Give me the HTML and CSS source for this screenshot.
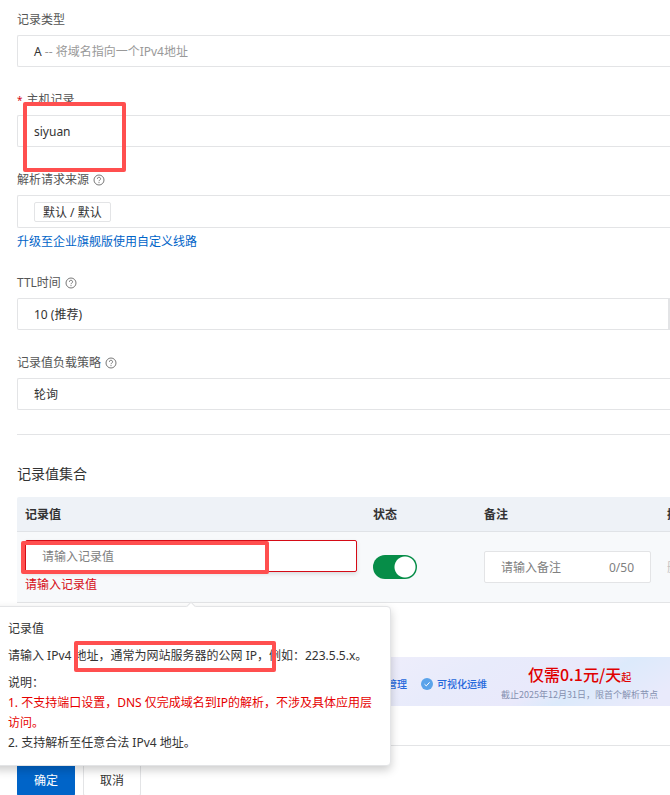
FILE: index.html
```html
<!DOCTYPE html>
<html lang="zh-CN">
<head>
  <meta charset="utf-8">
  <meta name="viewport" content="width=device-width, initial-scale=1">
  <title>添加记录</title>
  <link rel="stylesheet" href="styles.css">
</head>
<body>
  <svg class="sprite" aria-hidden="true">
    <symbol id="icon-help" viewBox="0 0 12 12">
      <circle cx="6" cy="6" r="5" fill="none" stroke="currentColor"/>
      <path d="M4.4 4.8a1.6 1.5 0 1 1 2.3 1.3c-.5.3-.7.5-.7 1.1" fill="none" stroke="currentColor"/>
      <circle cx="6" cy="8.6" r=".6" fill="currentColor"/>
    </symbol>
  </svg>

  <form class="record-form">
    <div class="field">
      <label class="field-label" for="type">记录类型</label>
      <button type="button" id="type" class="control">A <span class="muted">-- 将域名指向一个IPv4地址</span></button>
    </div>

    <div class="field marked-field">
      <label class="field-label" for="host"><span class="required">*</span>主机记录</label>
      <input type="text" id="host" class="control control-text" value="siyuan">
      <div class="mark mark-host"></div>
    </div>

    <div class="field">
      <label class="field-label" for="line">解析请求来源 <svg class="help"><use href="#icon-help"/></svg></label>
      <button type="button" id="line" class="control control-tags"><span class="tag">默认 / 默认</span></button>
      <a class="upgrade" href="#">升级至企业旗舰版使用自定义线路</a>
    </div>

    <div class="field">
      <label class="field-label" for="ttl">TTL时间 <svg class="help"><use href="#icon-help"/></svg></label>
      <select id="ttl" class="control control-joined">
        <option>10 (推荐)</option>
      </select>
    </div>

    <div class="field">
      <label class="field-label" for="policy">记录值负载策略 <svg class="help"><use href="#icon-help"/></svg></label>
      <select id="policy" class="control">
        <option>轮询</option>
      </select>
    </div>

    <section class="records">
      <h2 class="records-title">记录值集合</h2>
      <table class="records-table">
        <thead>
          <tr>
            <th class="col-value">记录值</th>
            <th class="col-status">状态</th>
            <th class="col-remark">备注</th>
            <th>操作</th>
          </tr>
        </thead>
        <tbody>
          <tr>
            <td>
              <div class="value-cell">
                <input type="text" class="value-input" placeholder="请输入记录值" aria-label="记录值">
                <div class="error">请输入记录值</div>
                <div class="mark mark-value"></div>

                <div class="popover" role="tooltip">
                  <div class="popover-title">记录值</div>
                  <p class="popover-text">请输入 IPv4 地址，通常为网站服务器的公网 IP，例如：223.5.5.x。</p>
                  <div class="popover-notes">
                    <div>说明：</div>
                    <div class="warning">1. 不支持端口设置，DNS 仅完成域名到IP的解析，不涉及具体应用层访问。</div>
                    <div>2. 支持解析至任意合法 IPv4 地址。</div>
                  </div>
                  <div class="mark mark-address"></div>
                </div>
              </div>
            </td>
            <td><input type="checkbox" class="switch" aria-label="状态" checked></td>
            <td>
              <label class="remark">
                <input type="text" class="remark-input" placeholder="请输入备注" aria-label="备注">
                <span>0/50</span>
              </label>
            </td>
            <td><button type="button" class="delete" disabled>删除</button></td>
          </tr>
        </tbody>
      </table>
    </section>

    <a class="banner" href="#">
      <span class="banner-feature">管理</span>
      <span class="banner-feature">
        <svg class="check" viewBox="0 0 12 12">
          <circle cx="6" cy="6" r="6" fill="#5aa3ea"/>
          <path d="M3.5 6.2l1.8 1.7 3.3-3.6" fill="none" stroke="#fff"/>
        </svg>
        可视化运维
      </span>
      <span class="banner-offer">
        <strong class="price">仅需0.1元/天<small>起</small></strong>
        <span class="deadline">截止2025年12月31日，限首个解析节点</span>
      </span>
    </a>

    <div class="actions">
      <button type="submit" class="button button-primary">确定</button>
      <button type="button" class="button">取消</button>
    </div>
  </form>
</body>
</html>
```
FILE: styles.css
```css
* {
  box-sizing: border-box;
}

body {
  margin: 0;
  height: 100vh;
  overflow: hidden;
  background-color: #ffffff;
  color: #333333;
  font-family: "Noto Sans", "Noto Sans CJK SC", sans-serif;
  font-size: 12px;
  line-height: 20px;
}

button,
input,
select {
  margin: 0;
  font: inherit;
  color: inherit;
}

a {
  color: #0064c8;
  text-decoration: none;
}

.sprite {
  position: absolute;
  width: 0;
  height: 0;
}

.record-form {
  padding: 3px 0 0 17px;
}

/* Fields */
.field {
  margin-bottom: 16px;
}

.field-label {
  display: flex;
  align-items: center;
  gap: 4px;
  height: 32px;
  padding-top: 2px;
  color: #555555;
}

.required {
  color: #d50b16;
  font-size: 10px;
}

.help {
  width: 12px;
  height: 12px;
  color: #777777;
}

.control {
  display: block;
  width: 100%;
  height: 32px;
  padding: 2px 16px 0;
  border: 1px solid #e3e4e6;
  border-right: none;
  border-radius: 2px 0 0 2px;
  background-color: #ffffff;
  text-align: left;
  appearance: none;
  outline: none;
}

.control-text {
  padding-top: 0;
}

.control-tags {
  height: 33px;
}

.control-joined {
  border-right: 2px solid #e3e4e6;
}

.muted {
  color: #999999;
}

.tag {
  display: inline-block;
  height: 20px;
  padding: 0 8px;
  border: 1px solid #e3e4e6;
  border-radius: 2px;
  line-height: 20px;
}

.upgrade {
  display: block;
  margin-bottom: -4px;
  padding: 4px 0 2px;
}

/* Records table */
.records {
  margin-top: 24px;
  padding-top: 28px;
  border-top: 1px solid #e3e4e6;
}

.records-title {
  margin: 0 0 12px;
  font-size: 14px;
  font-weight: 400;
  line-height: 22px;
}

.records-table {
  width: calc(100% + 64px);
  table-layout: fixed;
  border-spacing: 0;
}

.records-table th {
  height: 35px;
  padding: 2px 8px 0;
  border-bottom: 1px solid #e0e3e7;
  background-color: #eef2f7;
  font-weight: 600;
  text-align: left;
}

.records-table th:first-child {
  border-top-left-radius: 2px;
}

.records-table td {
  padding: 8px;
  border-bottom: 1px solid #e3e4e6;
  background-color: #f7f9fb;
}

.col-value {
  width: 348px;
}

.col-status {
  width: 111px;
}

.col-remark {
  width: 183px;
}

.value-cell {
  position: relative;
}

.value-input {
  display: block;
  width: 100%;
  height: 32px;
  padding: 0 16px;
  border: 1px solid #d50b16;
  border-radius: 2px;
  background-color: #ffffff;
  box-shadow: 0 2px 4px rgba(0, 0, 0, 0.12);
  outline: none;
}

::placeholder {
  color: #808080;
  opacity: 1;
}

.error {
  padding-top: 4px;
  line-height: 18px;
  color: #d50b16;
}

.switch {
  display: block;
  width: 44px;
  height: 24px;
  border-radius: 12px;
  background: radial-gradient(circle at 32px 12px, #ffffff 10px, #068d48 11px);
  appearance: none;
}

.remark {
  display: flex;
  align-items: center;
  height: 32px;
  padding: 2px 16px 0;
  border: 1px solid #e3e4e6;
  border-radius: 2px;
  background-color: #ffffff;
  color: #808080;
}

.remark-input {
  flex: 1;
  min-width: 0;
  padding: 0;
  border: none;
  outline: none;
}

.delete {
  padding: 2px 0 0;
  border: none;
  background: none;
  color: #c1c1c1;
}

/* Popover */
.popover {
  position: absolute;
  z-index: 2;
  top: 66px;
  left: 50%;
  width: 400px;
  padding: 12px 16px;
  transform: translateX(-50%);
  border: 1px solid #e3e4e6;
  border-radius: 4px;
  background-color: #ffffff;
  box-shadow: 0 4px 10px rgba(0, 0, 0, 0.2);
}

.popover::before {
  content: "";
  position: absolute;
  top: -4px;
  left: 50%;
  width: 6px;
  height: 6px;
  transform: translateX(-50%) rotate(45deg);
  border: 1px solid #e3e4e6;
  border-right: none;
  border-bottom: none;
  background-color: #ffffff;
}

.popover-text {
  margin: 7px 0;
}

.warning {
  color: #e60000;
}

/* Highlight frames */
.mark {
  position: absolute;
  border: 4px solid #ff4f4f;
  border-radius: 2px;
  pointer-events: none;
}

.marked-field {
  position: relative;
}

.mark-host {
  top: 19px;
  left: 6px;
  width: 103px;
  height: 70px;
}

.mark-value {
  top: 1px;
  left: -4px;
  width: 248px;
  height: 33px;
}

.mark-address {
  top: 34px;
  left: 82px;
  width: 202px;
  height: 31px;
}

/* Banner */
.banner {
  display: flex;
  align-items: center;
  justify-content: flex-end;
  gap: 14px;
  height: 49px;
  margin-top: 54px;
  padding: 4px 12px 0 0;
  background: linear-gradient(150deg, #f2effb 40%, #e8ebfb 65%, #e9e9fb 78%, #dceafb 84%, #e9eafb 96%);
  color: #2468dc;
  font-family: "Noto Sans CJK SC", sans-serif;
  font-size: 10px;
}

.banner-feature {
  display: flex;
  align-items: center;
  gap: 4px;
  font-weight: 500;
}

.check {
  width: 12px;
  height: 12px;
}

.banner-offer {
  display: flex;
  flex-direction: column;
  align-items: center;
}

.price {
  color: #e00000;
  font-size: 16px;
  font-weight: 500;
}

.price small {
  font-size: 10px;
}

.deadline {
  color: #8590b0;
  font-size: 9px;
  line-height: 16px;
}

/* Footer buttons */
.actions {
  display: flex;
  gap: 8px;
  margin-top: 39px;
  padding-top: 18px;
  border-top: 1px solid #e3e4e6;
}

.button {
  height: 32px;
  padding: 2px 16px 0;
  border: 1px solid #e3e4e6;
  border-radius: 2px;
  background-color: #ffffff;
}

.button-primary {
  border-color: #0064c8;
  background-color: #0064c8;
  color: #ffffff;
}
```
